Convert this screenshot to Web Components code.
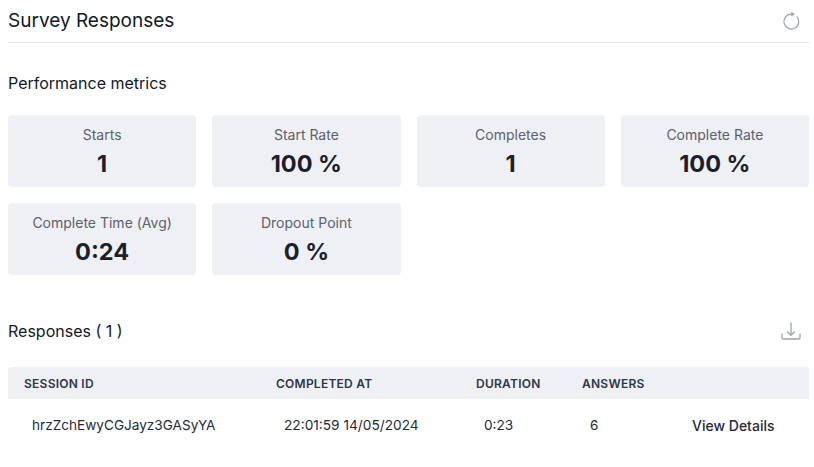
<!DOCTYPE html>
<html>
<head>
<meta charset="utf-8">
<title>Survey Responses</title>
<style>
  body { margin: 0; font-family: Inter, "Liberation Sans", sans-serif; color: #111827; background: #fff; }
</style>
</head>
<body>
<survey-page></survey-page>

<script>
const ICONS = {
  refresh: '<path d="M15.8 5.6A7.4 7.4 0 1 1 10 3.2"/><path d="M10.2 .8 14 3.2 10.2 5.6z" fill="currentColor" stroke="none"/>',
  download: '<path d="M10 1.5v12.5"/><path d="m6.2 10.5 3.8 3.8 3.8-3.8"/><path d="M1 12.5v4.2a1.3 1.3 0 0 0 1.3 1.3h15.4a1.3 1.3 0 0 0 1.3-1.3v-4.2"/>',
};

class IconButton extends HTMLElement {
  connectedCallback() {
    const name = this.getAttribute("icon");
    this.attachShadow({ mode: "open" });
    this.shadowRoot.innerHTML = `
      <style>
        :host { display: block; width: 20px; height: 20px; color: #9ca3af; }
        svg { display: block; fill: none; stroke: currentColor; stroke-width: 1.3; }
      </style>
      <svg width="20" height="20" viewBox="0 0 20 20">${ICONS[name] || ""}</svg>
    `;
  }
}

class SectionHeader extends HTMLElement {
  connectedCallback() {
    this.attachShadow({ mode: "open" });
    this.shadowRoot.innerHTML = `
      <style>
        :host { display: flex; justify-content: space-between; align-items: center; }
        ::slotted(*) { margin: 0; }
      </style>
      <slot name="title"></slot>
      <slot name="action"></slot>
    `;
  }
}

class MetricCard extends HTMLElement {
  connectedCallback() {
    this.attachShadow({ mode: "open" });
    this.shadowRoot.innerHTML = `
      <style>
        :host {
          display: flex;
          flex-direction: column;
          align-items: center;
          height: 72px;
          box-sizing: border-box;
          padding-top: 10px;
          background: #eff0f4;
          border-radius: 4px;
        }
        .label { font-size: 14px; line-height: 20px; color: #5b6270; }
        .value { font-size: 23.5px; line-height: 32px; font-weight: 700; color: #1a202c; margin-top: 3px; }
      </style>
      <div class="label">${this.getAttribute("label")}</div>
      <div class="value">${this.getAttribute("value")}</div>
    `;
  }
}

class MetricGrid extends HTMLElement {
  connectedCallback() {
    this.attachShadow({ mode: "open" });
    this.shadowRoot.innerHTML = `
      <style>
        :host { display: grid; grid-template-columns: repeat(4, 1fr); gap: 16px; }
      </style>
      <slot></slot>
    `;
  }
}

class ResponsesTable extends HTMLElement {
  connectedCallback() {
    this.attachShadow({ mode: "open" });
    const rows = [["hrzZchEwyCGJayz3GASyYA", "22:01:59 14/05/2024", "0:23", "6"]];
    this.shadowRoot.innerHTML = `
      <style>
        :host { display: block; }
        .row { display: grid; grid-template-columns: 252px 200px 106px 110px 1fr; }
        .head {
          height: 32px;
          align-items: center;
          background: #eff0f4;
          border-radius: 4px 4px 0 0;
          font-size: 12px;
          font-weight: 600;
          letter-spacing: 0.25px;
          color: #2d3748;
        }
        .head span { padding-left: 16px; }
        .body { height: 52px; align-items: center; font-size: 13.6px; color: #1f2937; padding-bottom: 0; }
        .body span { padding-left: 24px; }
        .body span:nth-child(2) { font-size: 13.7px; }
        .body .link { padding-left: 16px; font-size: 14px; font-weight: 500; color: #1f2937; }
      </style>
      <div class="row head">
        <span>SESSION ID</span><span>COMPLETED AT</span><span>DURATION</span><span>ANSWERS</span><span></span>
      </div>
      ${rows.map((r) => `
        <div class="row body">
          ${r.map((c) => `<span>${c}</span>`).join("")}
          <span class="link">View Details</span>
        </div>`).join("")}
    `;
  }
}

class SurveyPage extends HTMLElement {
  connectedCallback() {
    this.attachShadow({ mode: "open" });
    this.shadowRoot.innerHTML = `
      <style>
        :host { display: block; padding: 0 5px 0 8px; }
        .top { height: 42px; border-bottom: 1px solid #e2e4e8; }
        h1 { font-size: 19px; line-height: 42px; font-weight: 400; }
        h2 { font-size: 16px; line-height: 24px; font-weight: 400; }
        .metrics-title { margin-top: 28px; margin-bottom: 20px; }
        .responses-title { margin-top: 44px; margin-bottom: 24px; height: 24px; }
      </style>
      <section-header class="top">
        <h1 slot="title">Survey Responses</h1>
        <icon-button slot="action" icon="refresh" style="margin-right:8px"></icon-button>
      </section-header>
      <section-header class="metrics-title"><h2 slot="title">Performance metrics</h2></section-header>
      <metric-grid>
        <metric-card label="Starts" value="1"></metric-card>
        <metric-card label="Start Rate" value="100 %"></metric-card>
        <metric-card label="Completes" value="1"></metric-card>
        <metric-card label="Complete Rate" value="100 %"></metric-card>
        <metric-card label="Complete Time (Avg)" value="0:24"></metric-card>
        <metric-card label="Dropout Point" value="0 %"></metric-card>
      </metric-grid>
      <section-header class="responses-title">
        <h2 slot="title">Responses ( 1 )</h2>
        <icon-button slot="action" icon="download" style="margin-right:8px"></icon-button>
      </section-header>
      <responses-table></responses-table>
    `;
  }
}

customElements.define("icon-button", IconButton);
customElements.define("section-header", SectionHeader);
customElements.define("metric-card", MetricCard);
customElements.define("metric-grid", MetricGrid);
customElements.define("responses-table", ResponsesTable);
customElements.define("survey-page", SurveyPage);
</script>
</body>
</html>
